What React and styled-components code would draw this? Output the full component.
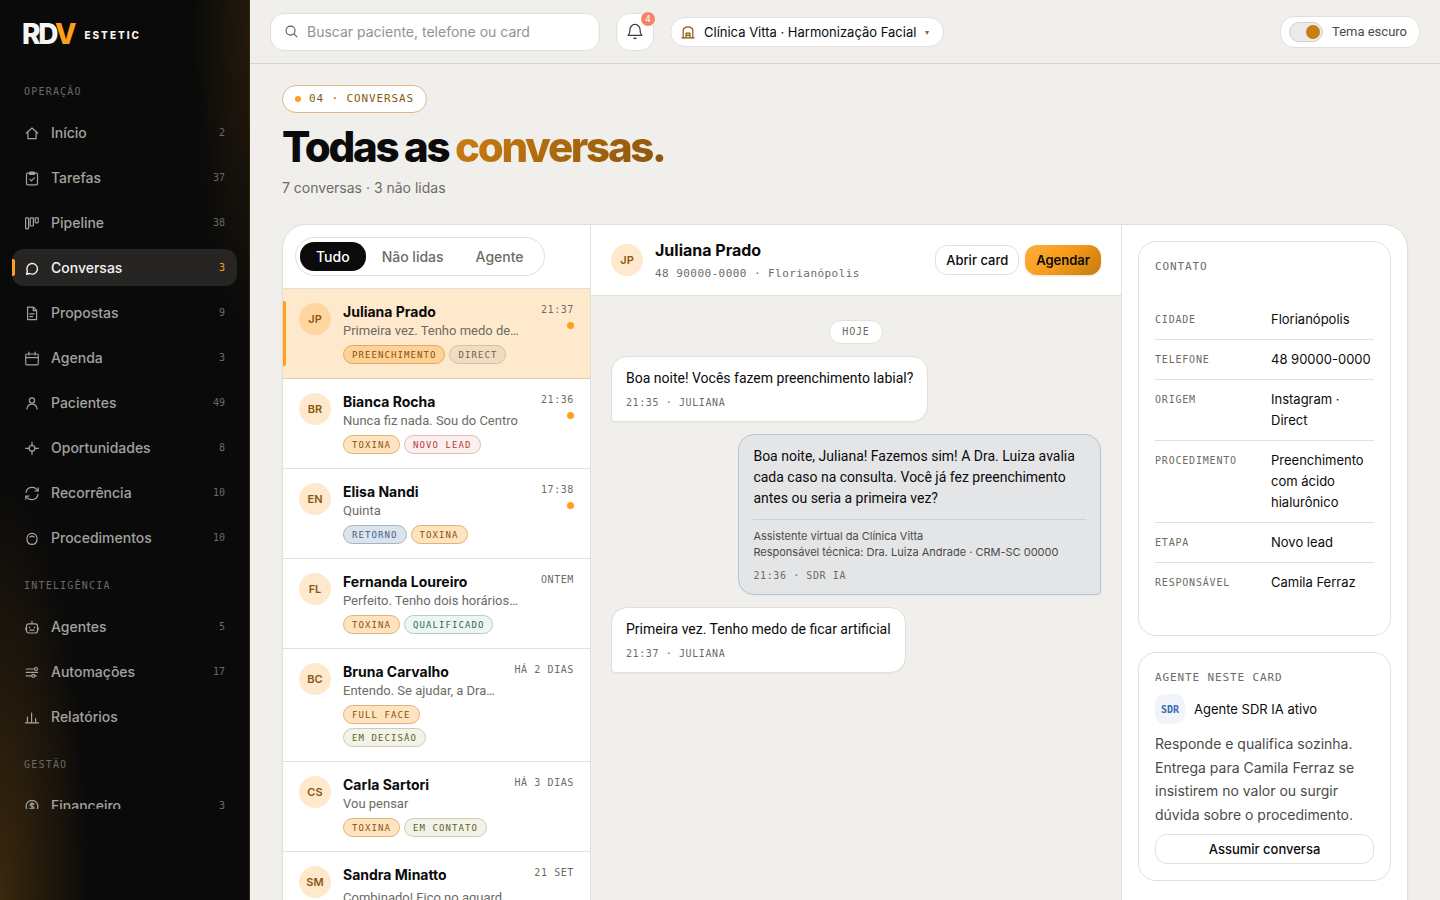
import React from "react";
import styled, { createGlobalStyle, css } from "styled-components";

const sans = `Inter, "Liberation Sans", sans-serif`;
const text = `Roboto, "Liberation Sans", sans-serif`;
const mono = `"DejaVu Sans Mono", "Liberation Mono", monospace`;

const c = {
  bg: "#f0efeb",
  surface: "#ffffff",
  line: "#e0dfdc",
  ink: "#0b0b0b",
  muted: "#6d6b66",
  soft: "#4c4a46",
  orange: "#ff9f1c",
  brown: "#8a5710",
};

const GlobalStyle = createGlobalStyle`
  *, *::before, *::after { box-sizing: border-box; }
  body { margin: 0; background: ${c.bg}; color: ${c.ink}; font-family: ${sans}; font-size: 14px; -webkit-font-smoothing: antialiased; }
  button, input, select { font: inherit; color: inherit; }
  h1, h2, h3, p, ul, dl, dd { margin: 0; padding: 0; }
  ul { list-style: none; }
`;

const Shell = styled.div`
  display: grid;
  grid-template-columns: 250px minmax(0, 1fr);
  height: 100vh;
`;

/* Sidebar */
const Sidebar = styled.aside`
  display: flex;
  flex-direction: column;
  height: 100vh;
  padding: 0 12px;
  border-right: 1px solid #3a270b;
  background:
    radial-gradient(ellipse 90px 420px at 0% 100%, rgba(255, 159, 28, 0.2), transparent),
    radial-gradient(ellipse 56px 300px at 100% 4%, rgba(255, 159, 28, 0.1), transparent),
    #0a0a0a;
`;
const Brand = styled.a`
  display: flex;
  align-items: center;
  gap: 10px;
  height: 70px;
  flex: none;
  padding: 0 10px 2px;
  text-decoration: none;
  color: #f5f5f3;
`;
const BrandMark = styled.span`
  font-size: 28px;
  font-weight: 800;
  line-height: 28px;
  letter-spacing: -0.08em;
  em { font-style: normal; color: ${c.orange}; }
`;
const BrandName = styled.span`
  font-size: 10px;
  font-weight: 800;
  line-height: 12px;
  padding-top: 2px;
  letter-spacing: 0.2em;
`;
const Nav = styled.nav`
  display: flex;
  flex-direction: column;
  gap: 8px;
  flex: 1;
  min-height: 0;
  overflow: hidden;
`;
const SideFoot = styled.div`
  flex: none;
  height: 91px;
`;
const NavLabel = styled.div`
  flex: none;
  padding: 14px 12px 7px;
  font: 10px/15px ${mono};
  letter-spacing: 0.12em;
  color: #6b6a67;
`;
const NavItem = styled.a`
  position: relative;
  display: flex;
  align-items: center;
  gap: 11px;
  flex: none;
  height: 37px;
  padding: 0 12px;
  border-radius: 12px;
  text-decoration: none;
  font-weight: 500;
  line-height: 18px;
  color: ${(p) => (p.$active ? "#f4f3f0" : "#a3a29e")};
  background: ${(p) => (p.$active ? "#262524" : "transparent")};
  ${(p) =>
    p.$active &&
    css`
      &::before {
        content: "";
        position: absolute;
        left: 0;
        top: 10px;
        width: 3px;
        height: 17px;
        background: ${c.orange};
        border-radius: 0 2px 2px 0;
      }
    `}
`;
const NavCount = styled.span`
  margin-left: auto;
  font: 10px/15px ${mono};
  color: ${(p) => (p.$active ? c.orange : "#6b6a67")};
`;

/* Top bar */
const Main = styled.div`
  min-width: 0;
  height: 100vh;
  overflow: hidden;
`;
const TopBar = styled.header`
  display: flex;
  align-items: center;
  gap: 16px;
  height: 64px;
  padding: 0 20px;
  border-bottom: 1px solid #d6d5d1;
`;
const Search = styled.label`
  display: flex;
  align-items: center;
  gap: 8px;
  width: 330px;
  height: 38px;
  padding: 0 13px;
  border: 1px solid ${c.line};
  border-radius: 14px;
  background: ${c.surface};
  color: #5c5a56;
  input {
    flex: 1;
    min-width: 0;
    border: 0;
    outline: 0;
    padding: 0;
    background: none;
    font-size: 14px;
  }
  input::placeholder { color: #94928d; opacity: 1; }
`;
const BellButton = styled.button`
  position: relative;
  display: grid;
  place-items: center;
  width: 38px;
  height: 38px;
  padding: 0 0 2px;
  border: 1px solid ${c.line};
  border-radius: 14px;
  background: ${c.surface};
  color: #3b3a37;
`;
const BellBadge = styled.span`
  position: absolute;
  top: -2px;
  right: -2px;
  width: 14px;
  height: 14px;
  border-radius: 7px;
  background: #f5836a;
  color: #fff;
  font: 9px/14px ${sans};
  text-align: center;
`;
const ClinicPill = styled.label`
  display: flex;
  align-items: center;
  gap: 8px;
  height: 30px;
  padding: 0 14px 0 9px;
  border: 1px solid ${c.line};
  border-radius: 15px;
  background: ${c.surface};
  color: ${c.brown};
  select {
    appearance: none;
    border: 0;
    outline: 0;
    padding: 0;
    background: none;
    font-size: 13px;
    color: ${c.ink};
  }
`;
const Caret = styled.span`
  font-size: 8px;
  color: ${c.muted};
`;
const ThemePill = styled.label`
  display: flex;
  align-items: center;
  gap: 9px;
  height: 32px;
  margin-left: auto;
  padding: 0 12px 0 8px;
  border: 1px solid ${c.line};
  border-radius: 14px;
  background: ${c.surface};
  font-family: ${text};
  font-size: 13px;
  color: ${c.soft};
`;
const Switch = styled.input`
  appearance: none;
  display: flex;
  align-items: center;
  justify-content: flex-end;
  width: 34px;
  height: 20px;
  margin: 0;
  padding: 0 2px;
  border: 1px solid #d2d2cf;
  border-radius: 10px;
  background: #e9eaea;
  &::before {
    content: "";
    width: 14px;
    height: 14px;
    border-radius: 7px;
    background: #c97e12;
  }
`;

/* Page head */
const Page = styled.main`
  padding: 21px 32px 32px;
`;
const Chip = styled.span`
  display: inline-flex;
  align-items: center;
  gap: 8px;
  height: 28px;
  padding: 0 12px;
  border: 1px solid #d9b98a;
  border-radius: 14px;
  background: ${c.surface};
  font: 11px/16px ${mono};
  letter-spacing: 0.08em;
  color: ${c.brown};
  vertical-align: top;
  &::before {
    content: "";
    width: 6px;
    height: 6px;
    border-radius: 3px;
    background: ${c.orange};
  }
`;
const Title = styled.h1`
  margin-top: 12px;
  font-size: 42px;
  line-height: 44px;
  font-weight: 800;
  letter-spacing: -0.055em;
  span {
    background: linear-gradient(135deg, #cf8013, #a5650c 60%, #87540f);
    -webkit-background-clip: text;
    background-clip: text;
    color: transparent;
  }
`;
const Subtitle = styled.p`
  margin: 8px 0 25px;
  font-size: 14px;
  line-height: 22px;
  color: ${c.muted};
`;
const Panel = styled.section`
  display: grid;
  grid-template-columns: 308px minmax(0, 1fr) 286px;
  border: 1px solid ${c.line};
  border-radius: 24px;
  overflow: hidden;
  background: ${c.surface};
  box-shadow: 0 1px 3px rgba(0, 0, 0, 0.05);
`;

/* Conversation list */
const ListColumn = styled.div`
  border-right: 1px solid ${c.line};
`;
const ListHead = styled.div`
  display: flex;
  padding: 12px;
  border-bottom: 1px solid ${c.line};
`;
const Segments = styled.div`
  display: flex;
  padding: 4px;
  border: 1px solid ${c.line};
  border-radius: 20px;
`;
const Segment = styled.button`
  height: 29px;
  padding: 0 16px 1px;
  border: 0;
  border-radius: 14px;
  font-size: 14px;
  font-weight: 500;
  background: ${(p) => (p.$active ? c.ink : "transparent")};
  color: ${(p) => (p.$active ? "#ffffff" : c.muted)};
`;
const Conversation = styled.button`
  position: relative;
  display: grid;
  grid-template-columns: 32px minmax(0, 1fr) auto;
  gap: 12px;
  align-items: start;
  width: 100%;
  padding: 14px 16px;
  border: 0;
  border-bottom: 1px solid ${(p) => (p.$active ? "#e3cdaf" : c.line)};
  background: ${(p) => (p.$active ? "#ffe9cd" : c.surface)};
  text-align: left;
  ${(p) =>
    p.$active &&
    css`
      &::before {
        content: "";
        position: absolute;
        left: 0;
        top: 12px;
        bottom: 12px;
        width: 3px;
        background: ${c.orange};
        border-radius: 0 2px 2px 0;
      }
    `}
`;
const Avatar = styled.span`
  display: grid;
  place-items: center;
  flex: none;
  width: 32px;
  height: 32px;
  border-radius: 16px;
  background: ${(p) => (p.$active ? "#ffd69f" : "#ffe9cd")};
  color: ${c.brown};
  font-size: 11px;
  font-weight: 600;
`;
const ConvText = styled.span`
  display: flex;
  flex-direction: column;
  min-width: 0;
`;
const ConvName = styled.span`
  font-size: 14px;
  font-weight: 700;
  line-height: 18px;
`;
const Preview = styled.span`
  font-family: ${text};
  font-size: 13px;
  line-height: ${(p) => (p.$tall ? "28px" : "20px")};
  color: ${c.muted};
  white-space: nowrap;
  overflow: hidden;
  text-overflow: ellipsis;
`;
const Tags = styled.span`
  display: flex;
  flex-wrap: wrap;
  gap: 4px;
  margin-top: 4px;
`;
const tones = {
  amber: ["#ffe3bf", "#dfb47a", "#85530c"],
  amberOn: ["#ffd197", "#dfaa66", "#85530c"],
  sand: ["#efdcc1", "#d3c2a8", "#6f6350"],
  red: ["#faf0f0", "#eab6b6", "#b93c34"],
  blue: ["#dde3eb", "#a3b3c9", "#3f618f"],
  green: ["#eff5f2", "#abd3c5", "#1f6f55"],
  olive: ["#f2f2ea", "#cdcfac", "#5e6420"],
};
const Tag = styled.span`
  height: 19px;
  padding: 0 8px;
  border: 1px solid ${(p) => tones[p.$tone][1]};
  border-radius: 10px;
  background: ${(p) => tones[p.$tone][0]};
  color: ${(p) => tones[p.$tone][2]};
  font: 9px/18px ${mono};
  letter-spacing: 0.12em;
`;
const ConvSide = styled.span`
  display: flex;
  flex-direction: column;
  align-items: flex-end;
  gap: 6px;
`;
const Time = styled.time`
  font: 10px/13px ${mono};
  letter-spacing: 0.06em;
  color: ${c.muted};
`;
const UnreadDot = styled.span`
  width: 7px;
  height: 7px;
  border-radius: 4px;
  background: ${c.orange};
`;

/* Chat */
const ChatColumn = styled.div`
  display: flex;
  flex-direction: column;
  min-width: 0;
  background: ${c.bg};
`;
const ChatHead = styled.div`
  display: flex;
  align-items: center;
  gap: 12px;
  height: 71px;
  padding: 0 20px;
  border-bottom: 1px solid ${c.line};
  background: ${c.surface};
`;
const ChatWho = styled.div`
  flex: 1;
  min-width: 0;
`;
const ChatName = styled.h2`
  font-size: 16px;
  line-height: 24px;
  font-weight: 700;
`;
const ChatSub = styled.p`
  padding-top: 4px;
  font: 11px/16px ${mono};
  letter-spacing: 0.04em;
  color: ${c.muted};
`;
const Actions = styled.div`
  display: flex;
  gap: 6px;
`;
const Button = styled.button`
  height: 30px;
  padding: 0 10px 1px;
  border: 1px solid ${(p) => (p.$primary ? "transparent" : c.line)};
  border-radius: 12px;
  background: ${(p) =>
    p.$primary ? "linear-gradient(135deg, #ffae3b, #f59a1a 50%, #c47a10) border-box" : c.surface};
  box-shadow: ${(p) => (p.$primary ? "0 1px 2px rgba(150, 90, 0, 0.2)" : "none")};
  font-size: 13px;
  font-weight: ${(p) => (p.$primary ? 600 : 500)};
`;
const Thread = styled.div`
  display: flex;
  flex-direction: column;
  align-items: flex-start;
  gap: 12px;
  padding: 24px 20px;
`;
const Day = styled.span`
  align-self: center;
  height: 24px;
  padding: 0 12px;
  border: 1px solid ${c.line};
  border-radius: 12px;
  background: ${c.surface};
  font: 10px/22px ${mono};
  letter-spacing: 0.08em;
  color: ${c.muted};
`;
const Bubble = styled.article`
  max-width: 74%;
  padding: 11px 14px;
  border: 1px solid ${(p) => (p.$agent ? "#b4c7da" : c.line)};
  border-radius: ${(p) => (p.$agent ? "16px 16px 4px 16px" : "16px 16px 16px 4px")};
  background: ${(p) => (p.$agent ? "#e4e5e7" : c.surface)};
  align-self: ${(p) => (p.$agent ? "flex-end" : "flex-start")};
  box-shadow: 0 1px 2px rgba(0, 0, 0, 0.04);
  font-family: ${text};
  line-height: 21px;
`;
const Legal = styled.p`
  margin-top: 10px;
  padding: 8px 0 2px;
  border-top: 1px solid #cfd1d4;
  font-family: ${sans};
  font-size: 11px;
  line-height: 16px;
  color: ${c.soft};
`;
const Meta = styled.p`
  margin-top: 6px;
  font: 10px/15px ${mono};
  letter-spacing: 0.06em;
  color: ${c.muted};
`;

/* Contact column */
const InfoColumn = styled.aside`
  display: flex;
  flex-direction: column;
  gap: 16px;
  padding: 16px;
  border-left: 1px solid ${c.line};
`;
const Card = styled.section`
  display: flex;
  flex-direction: column;
  gap: 8px;
  padding: 16px;
  border: 1px solid ${c.line};
  border-radius: 18px;
`;
const CardTitle = styled.h3`
  font: 11px/17px ${mono};
  letter-spacing: 0.08em;
  color: ${c.muted};
`;
const Facts = styled.dl`
  padding: 17px 0;
`;
const Fact = styled.div`
  display: grid;
  grid-template-columns: 104px minmax(0, 1fr);
  gap: 12px;
  padding: 9px 0;
  font-size: 13px;
  line-height: 21px;
  & + & { border-top: 1px solid ${c.line}; }
  dt {
    font: 10px/21px ${mono};
    letter-spacing: 0.08em;
    color: ${c.muted};
  }
`;
const AgentRow = styled.div`
  display: flex;
  align-items: center;
  gap: 9px;
  font-size: 13px;
`;
const AgentBadge = styled.span`
  display: grid;
  place-items: center;
  width: 30px;
  height: 30px;
  border-radius: 10px;
  background: #f1f5f9;
  color: #3a6bb0;
  font: 700 10px/15px ${mono};
`;
const AgentText = styled.p`
  font-size: 14px;
  line-height: 1.68;
  color: ${c.soft};
`;

const Svg = ({ size = 16, children }) => (
  <svg width={size} height={size} viewBox="0 0 16 16" fill="none" stroke="currentColor" strokeWidth="1.2" strokeLinecap="round" strokeLinejoin="round" aria-hidden="true">
    {children}
  </svg>
);

const icons = {
  home: <path d="M2.2 8.2 8 3l5.8 5.2M3.9 7v6.6h8.2V7" />,
  tasks: (
    <>
      <rect x="2.5" y="3.2" width="11" height="11.6" rx="1.4" />
      <rect x="5.6" y="2" width="4.8" height="2.4" rx=".6" fill="currentColor" />
      <path d="m5.9 9.3 1.5 1.5 2.9-3" />
    </>
  ),
  pipeline: (
    <>
      <rect x="1.6" y="2.8" width="3" height="11" rx=".8" />
      <rect x="6.2" y="2.8" width="3.2" height="8.2" rx=".8" />
      <rect x="11.2" y="2.8" width="3" height="5" rx=".8" />
    </>
  ),
  chat: <path d="m2.6 14.2.8-3.2a5.3 5.3 0 1 1 2.4 2.5z" strokeWidth="1.4" />,
  doc: <path d="M3.6 2.2h5.9L12.6 5.4v9.2h-9zM9.3 2.4v3.3h3.1M5.8 8.8h4.4M5.8 11.6h2.8" />,
  calendar: (
    <>
      <rect x="1.7" y="4" width="12.6" height="10.8" rx="1.3" />
      <path d="M1.7 7.6h12.6M5 2.2v3M11 2.2v3" />
    </>
  ),
  person: (
    <>
      <circle cx="8" cy="5.4" r="2.6" />
      <path d="M2.9 14c.5-3.2 2.5-4.9 5.1-4.9s4.6 1.7 5.1 4.9" />
    </>
  ),
  target: (
    <>
      <circle cx="8" cy="8.3" r="2.9" />
      <path d="M8 2.2v3.2M8 11.2v3.2M1.6 8.3h3.5M10.9 8.3h3.5" />
    </>
  ),
  refresh: <path d="M2 7.4A6.1 6.1 0 0 1 13.6 6M14 9.4A6.1 6.1 0 0 1 2.4 11M14.2 2.8V6h-3.3M1.8 14.2V11h3.3" />,
  procedure: (
    <>
      <path d="M8 3.4c3 0 5 2.4 5 5.6s-2 5.4-5 5.4-5-2.2-5-5.4 2-5.6 5-5.6z" />
      <path d="M5.8 6.9c1.2-.9 3.2-.9 4.4 0" />
    </>
  ),
  bot: (
    <>
      <rect x="2.5" y="4.8" width="11" height="9.2" rx="2.2" />
      <path d="M8 2.4v2.4M5.6 8.2v.6M10.4 8.2v.6M6 11.2h4M1.8 9v1.6M14.2 9v1.6" />
    </>
  ),
  flow: (
    <>
      <path d="M2.2 5h8M2.2 8.4h11.4M2.2 11.8h5.4M10.8 11.8h1.6" />
      <circle cx="12" cy="5" r="1.5" />
      <circle cx="9.2" cy="11.8" r="1.5" />
    </>
  ),
  chart: <path d="M1.4 13.8h13.2M3.4 13.6V8M7.6 13.6V4M11.6 13.6V9.6" />,
  money: (
    <>
      <circle cx="8" cy="8.3" r="5.9" />
      <path d="M10 6.4c-.4-.7-1.1-1-2-1-1.1 0-2 .5-2 1.4 0 2 4 .9 4 3 0 .9-.9 1.5-2 1.5-.9 0-1.7-.4-2.1-1.1M8 4.5v7.7" />
    </>
  ),
};

const navGroups = [
  ["OPERAÇÃO", [
    ["home", "Início", 2],
    ["tasks", "Tarefas", 37],
    ["pipeline", "Pipeline", 38],
    ["chat", "Conversas", 3, true],
    ["doc", "Propostas", 9],
    ["calendar", "Agenda", 3],
    ["person", "Pacientes", 49],
    ["target", "Oportunidades", 8],
    ["refresh", "Recorrência", 10],
    ["procedure", "Procedimentos", 10],
  ]],
  ["INTELIGÊNCIA", [
    ["bot", "Agentes", 5],
    ["flow", "Automações", 17],
    ["chart", "Relatórios", null],
  ]],
  ["GESTÃO", [["money", "Financeiro", 3]]],
];

const conversations = [
  { id: "JP", name: "Juliana Prado", text: "Primeira vez. Tenho medo de…", time: "21:37", unread: true, active: true, tags: [["amberOn", "PREENCHIMENTO"], ["sand", "DIRECT"]] },
  { id: "BR", name: "Bianca Rocha", text: "Nunca fiz nada. Sou do Centro", time: "21:36", unread: true, tags: [["amber", "TOXINA"], ["red", "NOVO LEAD"]] },
  { id: "EN", name: "Elisa Nandi", text: "Quinta", time: "17:38", unread: true, tags: [["blue", "RETORNO"], ["amber", "TOXINA"]] },
  { id: "FL", name: "Fernanda Loureiro", text: "Perfeito. Tenho dois horários…", time: "ONTEM", tags: [["amber", "TOXINA"], ["green", "QUALIFICADO"]] },
  { id: "BC", name: "Bruna Carvalho", text: "Entendo. Se ajudar, a Dra…", time: "HÁ 2 DIAS", tags: [["amber", "FULL FACE"], ["olive", "EM DECISÃO"]] },
  { id: "CS", name: "Carla Sartori", text: "Vou pensar", time: "HÁ 3 DIAS", tags: [["amber", "TOXINA"], ["olive", "EM CONTATO"]] },
  { id: "SM", name: "Sandra Minatto", text: "Combinado! Fico no aguard…", time: "21 SET", tall: true, tags: [["amber", "TOXINA"]] },
];

const facts = [
  ["CIDADE", "Florianópolis"],
  ["TELEFONE", "48 90000-0000"],
  ["ORIGEM", "Instagram · Direct"],
  ["PROCEDIMENTO", "Preenchimento com ácido hialurônico"],
  ["ETAPA", "Novo lead"],
  ["RESPONSÁVEL", "Camila Ferraz"],
];

export default function App() {
  return (
    <>
      <GlobalStyle />
      <Shell>
        <Sidebar>
          <Brand href="#">
            <BrandMark>RD<em>V</em></BrandMark>
            <BrandName>ESTETIC</BrandName>
          </Brand>
          <Nav aria-label="Principal">
            {navGroups.map(([label, items]) => (
              <React.Fragment key={label}>
                <NavLabel>{label}</NavLabel>
                {items.map(([icon, name, count, active]) => (
                  <NavItem key={name} href="#" $active={active} aria-current={active ? "page" : undefined}>
                    <Svg>{icons[icon]}</Svg>
                    {name}
                    {count !== null && <NavCount $active={active}>{count}</NavCount>}
                  </NavItem>
                ))}
              </React.Fragment>
            ))}
          </Nav>
          <SideFoot />
        </Sidebar>

        <Main>
          <TopBar>
            <Search>
              <Svg size={15}>
                <circle cx="7" cy="7" r="4.8" />
                <path d="m10.6 10.6 3.2 3.2" />
              </Svg>
              <input type="search" aria-label="Buscar" placeholder="Buscar paciente, telefone ou card" />
            </Search>
            <BellButton aria-label="Notificações">
              <Svg size={18}>
                <path d="M1.9 11.8h12.2c-1.2-1-1.6-2.2-1.6-5A4.5 4.5 0 0 0 8 2.2a4.5 4.5 0 0 0-4.5 4.6c0 2.8-.4 4-1.6 5zM6.9 14.3c.6.5 1.6.5 2.2 0" strokeWidth="1.1" />
              </Svg>
              <BellBadge>4</BellBadge>
            </BellButton>
            <ClinicPill>
              <Svg>
                <path d="M1.8 13.8h12.4M3.2 13.8V5.4C5 2 11 2 12.8 5.4v8.4M6 13.6V9.2h4v4.4M6 11.4h4" />
              </Svg>
              <select aria-label="Clínica">
                <option>Clínica Vitta · Harmonização Facial</option>
              </select>
              <Caret>▾</Caret>
            </ClinicPill>
            <ThemePill>
              <Switch type="checkbox" role="switch" />
              Tema escuro
            </ThemePill>
          </TopBar>

          <Page>
            <Chip>04 · CONVERSAS</Chip>
            <Title>Todas as <span>conversas.</span></Title>
            <Subtitle>7 conversas · 3 não lidas</Subtitle>

            <Panel>
              <ListColumn>
                <ListHead>
                  <Segments>
                    <Segment $active>Tudo</Segment>
                    <Segment>Não lidas</Segment>
                    <Segment>Agente</Segment>
                  </Segments>
                </ListHead>
                <ul>
                  {conversations.map((item) => (
                    <li key={item.id}>
                      <Conversation $active={item.active}>
                        <Avatar $active={item.active}>{item.id}</Avatar>
                        <ConvText>
                          <ConvName>{item.name}</ConvName>
                          <Preview $tall={item.tall}>{item.text}</Preview>
                          <Tags>
                            {item.tags.map(([tone, label]) => (
                              <Tag key={label} $tone={tone}>{label}</Tag>
                            ))}
                          </Tags>
                        </ConvText>
                        <ConvSide>
                          <Time>{item.time}</Time>
                          {item.unread && <UnreadDot />}
                        </ConvSide>
                      </Conversation>
                    </li>
                  ))}
                </ul>
              </ListColumn>

              <ChatColumn>
                <ChatHead>
                  <Avatar>JP</Avatar>
                  <ChatWho>
                    <ChatName>Juliana Prado</ChatName>
                    <ChatSub>48 90000-0000 · Florianópolis</ChatSub>
                  </ChatWho>
                  <Actions>
                    <Button>Abrir card</Button>
                    <Button $primary>Agendar</Button>
                  </Actions>
                </ChatHead>
                <Thread>
                  <Day>HOJE</Day>
                  <Bubble>
                    <p>Boa noite! Vocês fazem preenchimento labial?</p>
                    <Meta>21:35 · JULIANA</Meta>
                  </Bubble>
                  <Bubble $agent>
                    <p>Boa noite, Juliana! Fazemos sim! A Dra. Luiza avalia cada caso na consulta. Você já fez preenchimento antes ou seria a primeira vez?</p>
                    <Legal>
                      Assistente virtual da Clínica Vitta
                      <br />
                      Responsável técnica: Dra. Luiza Andrade · CRM-SC 00000
                    </Legal>
                    <Meta>21:36 · SDR IA</Meta>
                  </Bubble>
                  <Bubble>
                    <p>Primeira vez. Tenho medo de ficar artificial</p>
                    <Meta>21:37 · JULIANA</Meta>
                  </Bubble>
                </Thread>
              </ChatColumn>

              <InfoColumn>
                <Card>
                  <CardTitle>CONTATO</CardTitle>
                  <Facts>
                    {facts.map(([label, value]) => (
                      <Fact key={label}>
                        <dt>{label}</dt>
                        <dd>{value}</dd>
                      </Fact>
                    ))}
                  </Facts>
                </Card>
                <Card>
                  <CardTitle>AGENTE NESTE CARD</CardTitle>
                  <AgentRow>
                    <AgentBadge>SDR</AgentBadge>
                    Agente SDR IA ativo
                  </AgentRow>
                  <AgentText>
                    Responde e qualifica sozinha. Entrega para Camila Ferraz se insistirem no valor ou surgir dúvida sobre o procedimento.
                  </AgentText>
                  <Button>Assumir conversa</Button>
                </Card>
              </InfoColumn>
            </Panel>
          </Page>
        </Main>
      </Shell>
    </>
  );
}
